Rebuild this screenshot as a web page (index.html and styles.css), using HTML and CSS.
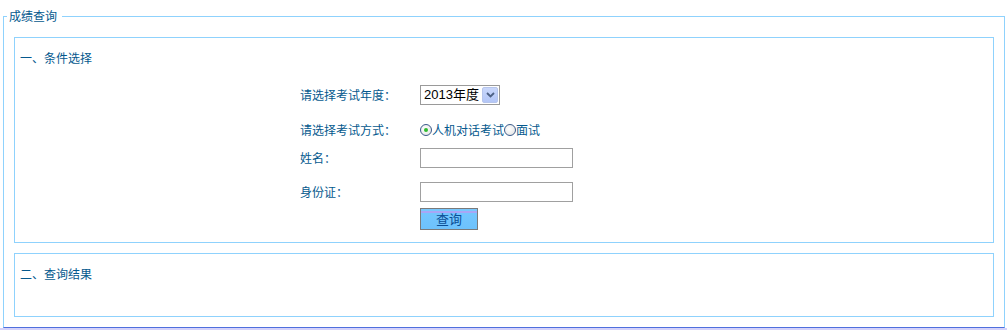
FILE: index.html
```html
<!DOCTYPE html>
<html lang="zh-CN">
<head>
<meta charset="utf-8">
<title>成绩查询</title>
<link rel="stylesheet" href="styles.css">
</head>
<body>
<fieldset class="outer">
  <legend class="outer-legend">成绩查询</legend>
  <div class="box box-cond">
    <div class="box-title">一、条件选择</div>
    <div class="row row1">
      <span class="label">请选择考试年度：</span>
      <span class="select">
        <span class="select-text">2013年度</span>
        <span class="select-btn"><svg width="9" height="6" viewBox="0 0 9 6"><path d="M1 1 L4.5 4.5 L8 1" fill="none" stroke="#4d6185" stroke-width="1.8"/></svg></span>
      </span>
    </div>
    <div class="row row2">
      <span class="label">请选择考试方式：</span>
      <span class="radio checked"></span><span class="opt">人机对话考试</span><span class="radio"></span><span class="opt">面试</span>
    </div>
    <div class="row row3">
      <span class="label">姓名：</span>
      <span class="input"></span>
    </div>
    <div class="row row4">
      <span class="label">身份证：</span>
      <span class="input"></span>
    </div>
    <div class="row row5">
      <span class="label"></span>
      <span class="btn">查询</span>
    </div>
  </div>
  <div class="box box-result">
    <div class="box-title">二、查询结果</div>
  </div>
</fieldset>
<div class="footer"></div>
</body>
</html>
```

FILE: styles.css
```css
html, body {
  margin: 0;
  padding: 0;
  background: #ffffff;
}
body {
  font-family: "Noto Sans CJK SC", "Liberation Sans", sans-serif;
  font-size: 12px;
  color: #05598e;
  overflow: hidden;
}
.outer {
  margin: 8px 2px 0 3px;
  padding: 13px 10px 10px 10px;
  border: 1px solid #8fd2fd;
  border-bottom-color: #4f6fdd;
  min-width: 0;
}
.outer-legend {
  margin-left: -7px;
  padding: 0 5px 0 2px;
  line-height: 16px;
  height: 16px;
  font-size: 12px;
}
.box {
  border: 1px solid #8fd2fd;
  padding: 0 5px;
}
.box-cond {
  padding-bottom: 12px;
}
.box-result {
  margin-top: 10px;
  height: 62px;
}
.box-title {
  margin-top: 12px;
  height: 16px;
  line-height: 16px;
}
.row {
  display: flex;
  align-items: center;
  padding-left: 280px;
  height: 20px;
}
.row1 { margin-top: 19px; }
.row2 { margin-top: 15px; }
.row3 { margin-top: 8px; }
.row4 { margin-top: 14px; }
.row5 { margin-top: 6px; height: 22px; }
.label {
  width: 120px;
  flex: none;
  line-height: 16px;
}
.select {
  box-sizing: border-box;
  width: 80px;
  height: 20px;
  border: 1px solid #9a9a9a;
  display: flex;
  align-items: center;
  justify-content: space-between;
  padding: 0 1px 0 3px;
  color: #000;
}
.select-text {
  font-family: "Liberation Sans", "Noto Sans CJK SC", sans-serif;
  font-size: 13px;
  line-height: 16px;
}
.select-btn {
  box-sizing: border-box;
  width: 16px;
  height: 16px;
  background: linear-gradient(#c9d7fb, #b3c6f7);
  border: 1px solid #b6c5ec;
  border-radius: 2px;
  display: flex;
  align-items: center;
  justify-content: center;
}
.radio {
  box-sizing: border-box;
  width: 12px;
  height: 12px;
  border-radius: 50%;
  border: 1px solid #3a5a8a;
  background: radial-gradient(circle at 40% 40%, #ffffff, #e0e0e0);
  flex: none;
  position: relative;
}
.radio.checked::after {
  content: "";
  position: absolute;
  left: 3px;
  top: 3px;
  width: 4px;
  height: 4px;
  border-radius: 50%;
  background: #2fbb2f;
}
.opt {
  line-height: 16px;
}
.input {
  box-sizing: border-box;
  width: 153px;
  height: 20px;
  border: 1px solid #a0a0a0;
  background: #fff;
}
.btn {
  box-sizing: border-box;
  width: 58px;
  height: 22px;
  border: 1px solid #7a7a7a;
  background: linear-gradient(#78c8fd 0, #78c8fd 2px, #a9a6f6 2px, #a9a6f6 4px, #74c6fe 4px, #6dc2fc 100%);
  color: #0b4f96;
  text-align: center;
  line-height: 20px;
  font-size: 13px;
}
.footer {
  height: 10px;
  background: #d4d2fb;
}
```
